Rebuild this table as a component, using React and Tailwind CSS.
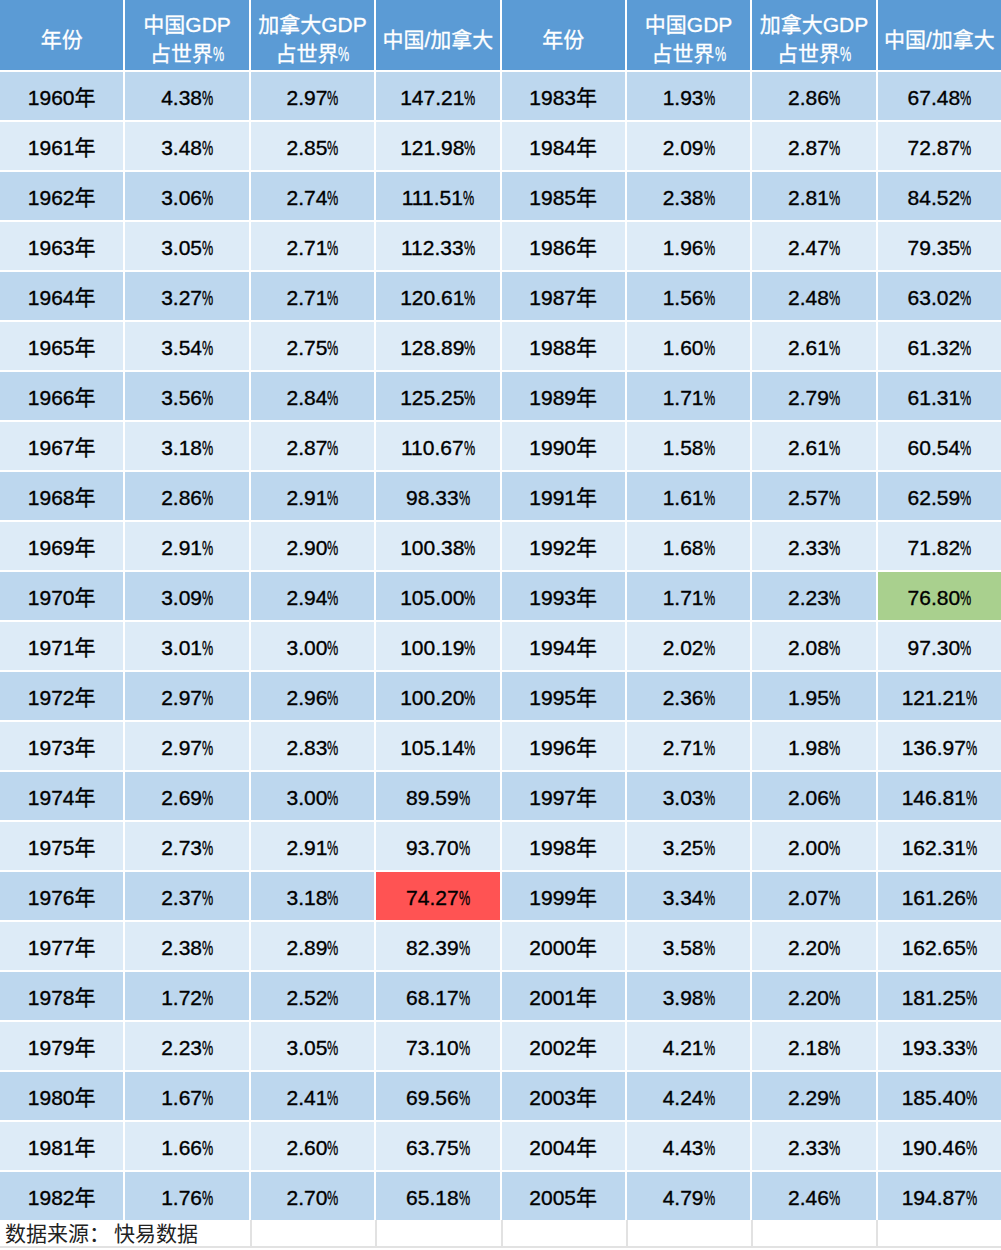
import React from 'react';

// 中国 / 加拿大 GDP 占世界比重对照表
const left = [
    ['1960年', '4.38%', '2.97%', '147.21%'],
    ['1961年', '3.48%', '2.85%', '121.98%'],
    ['1962年', '3.06%', '2.74%', '111.51%'],
    ['1963年', '3.05%', '2.71%', '112.33%'],
    ['1964年', '3.27%', '2.71%', '120.61%'],
    ['1965年', '3.54%', '2.75%', '128.89%'],
    ['1966年', '3.56%', '2.84%', '125.25%'],
    ['1967年', '3.18%', '2.87%', '110.67%'],
    ['1968年', '2.86%', '2.91%', '98.33%'],
    ['1969年', '2.91%', '2.90%', '100.38%'],
    ['1970年', '3.09%', '2.94%', '105.00%'],
    ['1971年', '3.01%', '3.00%', '100.19%'],
    ['1972年', '2.97%', '2.96%', '100.20%'],
    ['1973年', '2.97%', '2.83%', '105.14%'],
    ['1974年', '2.69%', '3.00%', '89.59%'],
    ['1975年', '2.73%', '2.91%', '93.70%'],
    ['1976年', '2.37%', '3.18%', '74.27%'],
    ['1977年', '2.38%', '2.89%', '82.39%'],
    ['1978年', '1.72%', '2.52%', '68.17%'],
    ['1979年', '2.23%', '3.05%', '73.10%'],
    ['1980年', '1.67%', '2.41%', '69.56%'],
    ['1981年', '1.66%', '2.60%', '63.75%'],
    ['1982年', '1.76%', '2.70%', '65.18%'],
];

const right = [
    ['1983年', '1.93%', '2.86%', '67.48%'],
    ['1984年', '2.09%', '2.87%', '72.87%'],
    ['1985年', '2.38%', '2.81%', '84.52%'],
    ['1986年', '1.96%', '2.47%', '79.35%'],
    ['1987年', '1.56%', '2.48%', '63.02%'],
    ['1988年', '1.60%', '2.61%', '61.32%'],
    ['1989年', '1.71%', '2.79%', '61.31%'],
    ['1990年', '1.58%', '2.61%', '60.54%'],
    ['1991年', '1.61%', '2.57%', '62.59%'],
    ['1992年', '1.68%', '2.33%', '71.82%'],
    ['1993年', '1.71%', '2.23%', '76.80%'],
    ['1994年', '2.02%', '2.08%', '97.30%'],
    ['1995年', '2.36%', '1.95%', '121.21%'],
    ['1996年', '2.71%', '1.98%', '136.97%'],
    ['1997年', '3.03%', '2.06%', '146.81%'],
    ['1998年', '3.25%', '2.00%', '162.31%'],
    ['1999年', '3.34%', '2.07%', '161.26%'],
    ['2000年', '3.58%', '2.20%', '162.65%'],
    ['2001年', '3.98%', '2.20%', '181.25%'],
    ['2002年', '4.21%', '2.18%', '193.33%'],
    ['2003年', '4.24%', '2.29%', '185.40%'],
    ['2004年', '4.43%', '2.33%', '190.46%'],
    ['2005年', '4.79%', '2.46%', '194.87%'],
];

const font = { fontFamily: '"Liberation Sans", "Noto Sans CJK SC", sans-serif' };

// the sheet renders "%" as a narrow glyph
const Pct = ({ text }) => {
    if (!text.endsWith('%')) return text;
    return (
        <>
            {text.slice(0, -1)}
            <span className="inline-block w-[11px] scale-x-[0.6] origin-left">%</span>
        </>
    );
};

const header = [
    ['年份'], ['中国GDP', '占世界%'], ['加拿大GDP', '占世界%'], ['中国/加拿大'],
];

const App = () => {
    return (
        <div className="w-[1001px] bg-white text-black" style={font}>
            <div className="grid grid-cols-8 gap-[2px] bg-white">
                {[...header, ...header].map((h, i) => (
                    <div key={i} className="h-[70px] pt-[8px] bg-[#5b9bd5] text-white text-[21px] leading-[29px] [-webkit-text-stroke:0.3px_white] flex flex-col items-center justify-center text-center">
                        {h.map((l, j) => <span key={j} className="whitespace-nowrap"><Pct text={l} /></span>)}
                    </div>
                ))}
                {left.map((row, r) => {
                    const band = r % 2 === 0 ? 'bg-[#bdd7ee]' : 'bg-[#ddebf7]';
                    const cells = [...row, ...right[r]];
                    return cells.map((c, i) => {
                        let bg = band;
                        if (c === '74.27%' && i === 3) bg = 'bg-[#ff5353]';
                        if (c === '76.80%' && i === 7) bg = 'bg-[#a9d08e]';
                        return (
                            <div key={r + '-' + i} className={`h-[48px] pt-[3px] flex items-center justify-center text-[21px] whitespace-nowrap [-webkit-text-stroke:0.35px_black] ${bg}`}>
                                <Pct text={c} />
                            </div>
                        );
                    });
                })}
            </div>
            {/* 数据来源 */}
            <div className="grid grid-cols-8 h-[28px] border-b-2 border-[#e2e2e2]">
                <div className="col-span-2 text-[21px] leading-[28px] pl-[5px] text-[#222] whitespace-nowrap">
                    数据来源：<span className="ml-[4px]">快易数据</span>
                </div>
                {[0, 1, 2, 3, 4, 5].map(i => (
                    <div key={i} className="border-l-2 border-[#e2e2e2]" />
                ))}
            </div>
        </div>
    );
};

export default App;
